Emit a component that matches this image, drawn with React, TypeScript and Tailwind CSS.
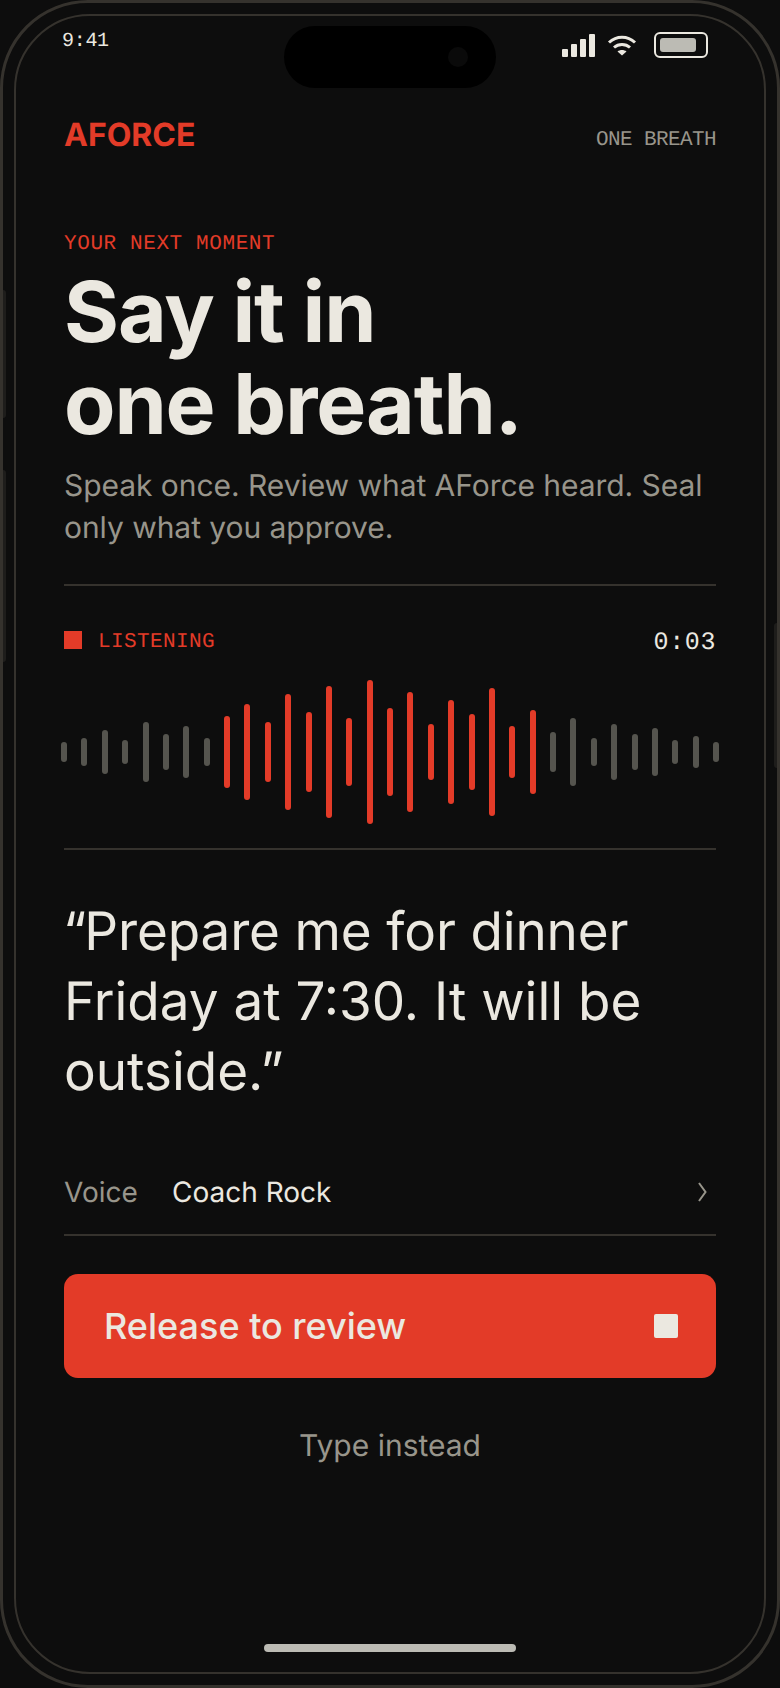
const WAVE = [
  [20, 0], [28, 0], [44, 0], [24, 0], [60, 0], [36, 0], [52, 0], [28, 0],
  [72, 1], [96, 1], [60, 1], [116, 1], [80, 1], [132, 1], [68, 1], [144, 1], [88, 1],
  [120, 1], [56, 1], [104, 1], [76, 1], [128, 1], [52, 1], [84, 1],
  [40, 0], [68, 0], [28, 0], [56, 0], [36, 0], [48, 0], [24, 0], [32, 0], [20, 0],
];

const mono = "font-['Liberation_Mono',monospace]";

const StatusIcons = () => (
  <div className="flex items-center">
    <svg width="34" height="24" viewBox="0 0 34 24" className="mr-[12px]" fill="#ebe8e0">
      <rect x="1" y="16" width="6" height="8" rx="1" />
      <rect x="10" y="11" width="6" height="13" rx="1" />
      <rect x="19" y="6" width="6" height="18" rx="1" />
      <rect x="28" y="1" width="6" height="23" rx="1" />
    </svg>
    <svg width="30" height="22" viewBox="0 0 30 22" className="mr-[17px]" fill="none" stroke="#ebe8e0" strokeWidth="3">
      <path d="M2 8.500C9.500 1.500 20.500 1.500 28 8.500" />
      <path d="M7 13.500C11.500 9.500 18.500 9.500 23 13.500" />
      <path d="M15 21.500L10.500 17.500C13 15.500 17 15.500 19.500 17.500Z" fill="#ebe8e0" stroke="none" />
    </svg>
    <div className="flex h-[26px] w-[54px] items-center rounded-[6px] border-2 border-[#ebe8e0] pl-[4px]">
      <div className="h-[14px] w-[36px] rounded-[3px] bg-[#bcbbb4]" />
    </div>
  </div>
);

export default function App() {
  return (
    <div className="relative h-[1688px] w-[780px] overflow-hidden bg-[#0d0d0d] font-['Inter',sans-serif] text-[#ebe8e0] antialiased [text-rendering:geometricPrecision]">
      {/* device frame */}
      <div className="absolute inset-0 rounded-[88px] border-[3px] border-[#35322d]" />
      <div className="absolute inset-[14px] rounded-[76px] border-2 border-[#35322d]" />
      <div className="absolute left-[3px] top-[290px] h-[128px] w-[3px] rounded-r bg-[#1e1d1b]" />
      <div className="absolute left-[3px] top-[470px] h-[192px] w-[3px] rounded-r bg-[#1e1d1b]" />
      <div className="absolute right-[3px] top-[623px] h-[145px] w-[3px] rounded-l bg-[#1e1d1b]" />

      {/* dynamic island */}
      <div className="absolute left-[284px] top-[26px] flex h-[62px] w-[212px] items-center justify-end rounded-[31px] bg-black pr-[28px]">
        <div className="h-[20px] w-[20px] rounded-full bg-[#0a0a0a]" />
      </div>

      <div className="relative flex h-full flex-col px-[64px]">
        <div className="flex h-[66px] items-start justify-between pt-[30px]">
          <span className={`${mono} -ml-[2px] mt-[2px] text-[20px] leading-[20px] tracking-[-0.3px] text-[#ebe8e0]`}>9:41</span>
          <div className="mr-[8px] pt-[2px]">
            <StatusIcons />
          </div>
        </div>

        <div className="mt-[49px] flex h-[39px] items-center justify-between">
          <span className="text-[32px] font-bold leading-[36px] text-[#e33b28]">AFORCE</span>
          <span className={`${mono} mt-[13px] text-[21px] leading-[24px] tracking-[-0.6px] text-[#98958b]`}>ONE BREATH</span>
        </div>

        <div className={`${mono} mt-[79px] text-[21px] leading-[24px] tracking-[0.6px] text-[#e33b28]`}>YOUR NEXT MOMENT</div>
        <h1 className="mt-[10px] text-[84px] font-bold leading-[92px] tracking-[-1.1px] text-[#ebe8e0]">
          Say it in
          <br />
          one breath.
        </h1>
        <p className="mt-[14px] text-[30px] leading-[42px] tracking-[-0.05px] text-[#98958b]">
          Speak once. Review what AForce heard. Seal only what you approve.
        </p>

        <div className="mt-[35px] h-[2px] bg-[#35322d]" />

        <div className="mt-[42px] flex items-center justify-between">
          <div className="flex items-center gap-[16px]">
            <div className="mb-[6px] h-[18px] w-[18px] bg-[#e33b28]" />
            <span className={`${mono} text-[21px] leading-[24px] tracking-[0.4px] text-[#e33b28]`}>LISTENING</span>
          </div>
          <span className={`${mono} mt-px text-[25px] leading-[28px] tracking-[0.6px] text-[#ebe8e0]`}>0:03</span>
        </div>

        <div className="-mx-[3px] mt-[23px] flex h-[144px] items-center justify-between">
          {WAVE.map(([h, on], i) => (
            <div
              key={i}
              className={on ? 'w-[6px] rounded-full bg-[#e33b28]' : 'w-[6px] rounded-full bg-[#55544e]'}
              style={{ height: h }}
            />
          ))}
        </div>

        <div className="mt-[24px] h-[2px] bg-[#35322d]" />

        <p className="mt-[46px] text-[53px] leading-[70px] text-[#ebe8e0]">
          <span className="-ml-[1px] tracking-[-2px]">“</span><span className="tracking-[-0.15px]">Prepare me for dinner</span> Friday at 7:30. It will be outside.”
        </p>

        <div className="mt-[49px] flex h-[81px] items-center border-b-2 border-[#35322d] pb-[5px]">
          <span className="w-[108px] text-[28px] text-[#98958b]">Voice</span>
          <span className="text-[28px] text-[#ebe8e0]">Coach Rock</span>
          <svg width="9" height="20" viewBox="0 0 9 20" fill="none" stroke="#98958b" strokeWidth="2" className="ml-auto mr-[9px]">
            <path d="M1 1L7.500 10L1 19" />
          </svg>
        </div>

        <button className="mt-[38px] flex h-[104px] shrink-0 items-center justify-between rounded-[14px] bg-[#e33b28] pl-[40px] pr-[38px]">
          <span className="text-[36px] font-medium text-[#ebe8e0]">Release to review</span>
          <span className="h-[24px] w-[24px] rounded-[2px] bg-[#ebe8e0]" />
        </button>

        <div className="mt-[48px] text-center text-[30px] leading-[40px] text-[#98958b]">Type instead</div>

        <div className="absolute bottom-[36px] left-[264px] h-[8px] w-[252px] rounded-full bg-[#bcbbb4]" />
      </div>
    </div>
  );
}
